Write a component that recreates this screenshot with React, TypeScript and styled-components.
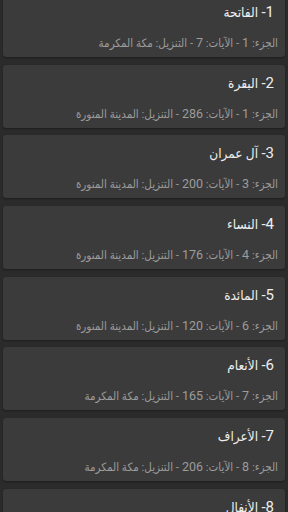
import styled, { createGlobalStyle } from "styled-components"

const GlobalStyle = createGlobalStyle`
    html, body {
        margin: 0;
        padding: 0;
        background-color: #2b2b2b;
    }
    body {
        font-family: Roboto, "DejaVu Sans Condensed", "DejaVu Sans", sans-serif;
        overflow: hidden;
    }
`

const List = styled.div`
    direction: rtl;
    display: flex;
    flex-direction: column;
    gap: 7.7px;
    margin-top: -6px;
    padding: 0 3px;
`

const Card = styled.div`
    background-color: #3b3b3b;
    border-radius: 3px;
    box-shadow: 0 1px 2px rgba(0, 0, 0, .35);
    height: 63px;
    box-sizing: border-box;
    padding: 8px 7px 5px;
    display: flex;
    flex-direction: column;
    gap: 12px;
`

const Title = styled.div`
    color: #eeeeee;
    font-size: 13.5px;
    line-height: 20px;
    padding-right: 4px;
    white-space: nowrap;
`

const Details = styled.div`
    color: #9c9c9c;
    font-size: 11.5px;
    line-height: 18px;
    white-space: nowrap;
`

const Num = styled.span<{ $size: number }>`
    font-size: ${p => p.$size}px;
`

const MAKKAH = 'مكة المكرمة'
const MADINAH = 'المدينة المنورة'

const surahs = [
    { n: 1, name: 'الفاتحة', juz: 1, ayat: 7, place: MAKKAH },
    { n: 2, name: 'البقرة', juz: 1, ayat: 286, place: MADINAH },
    { n: 3, name: 'آل عمران', juz: 3, ayat: 200, place: MADINAH },
    { n: 4, name: 'النساء', juz: 4, ayat: 176, place: MADINAH },
    { n: 5, name: 'المائدة', juz: 6, ayat: 120, place: MADINAH },
    { n: 6, name: 'الأنعام', juz: 7, ayat: 165, place: MAKKAH },
    { n: 7, name: 'الأعراف', juz: 8, ayat: 206, place: MAKKAH },
    { n: 8, name: 'الأنفال', juz: 9, ayat: 75, place: MADINAH },
]

const App = () => (
    <>
        <GlobalStyle />
        <List>
            {surahs.map(s => <Card key={s.n}>
                <Title><Num $size={15}>{s.n}-</Num> {s.name}</Title>
                <Details>
                    الجزء: <Num $size={12.5}>{s.juz}</Num> - الآيات: <Num $size={12.5}>{s.ayat}</Num> - التنزيل: {s.place}
                </Details>
            </Card>)}
        </List>
    </>
)

export default App
